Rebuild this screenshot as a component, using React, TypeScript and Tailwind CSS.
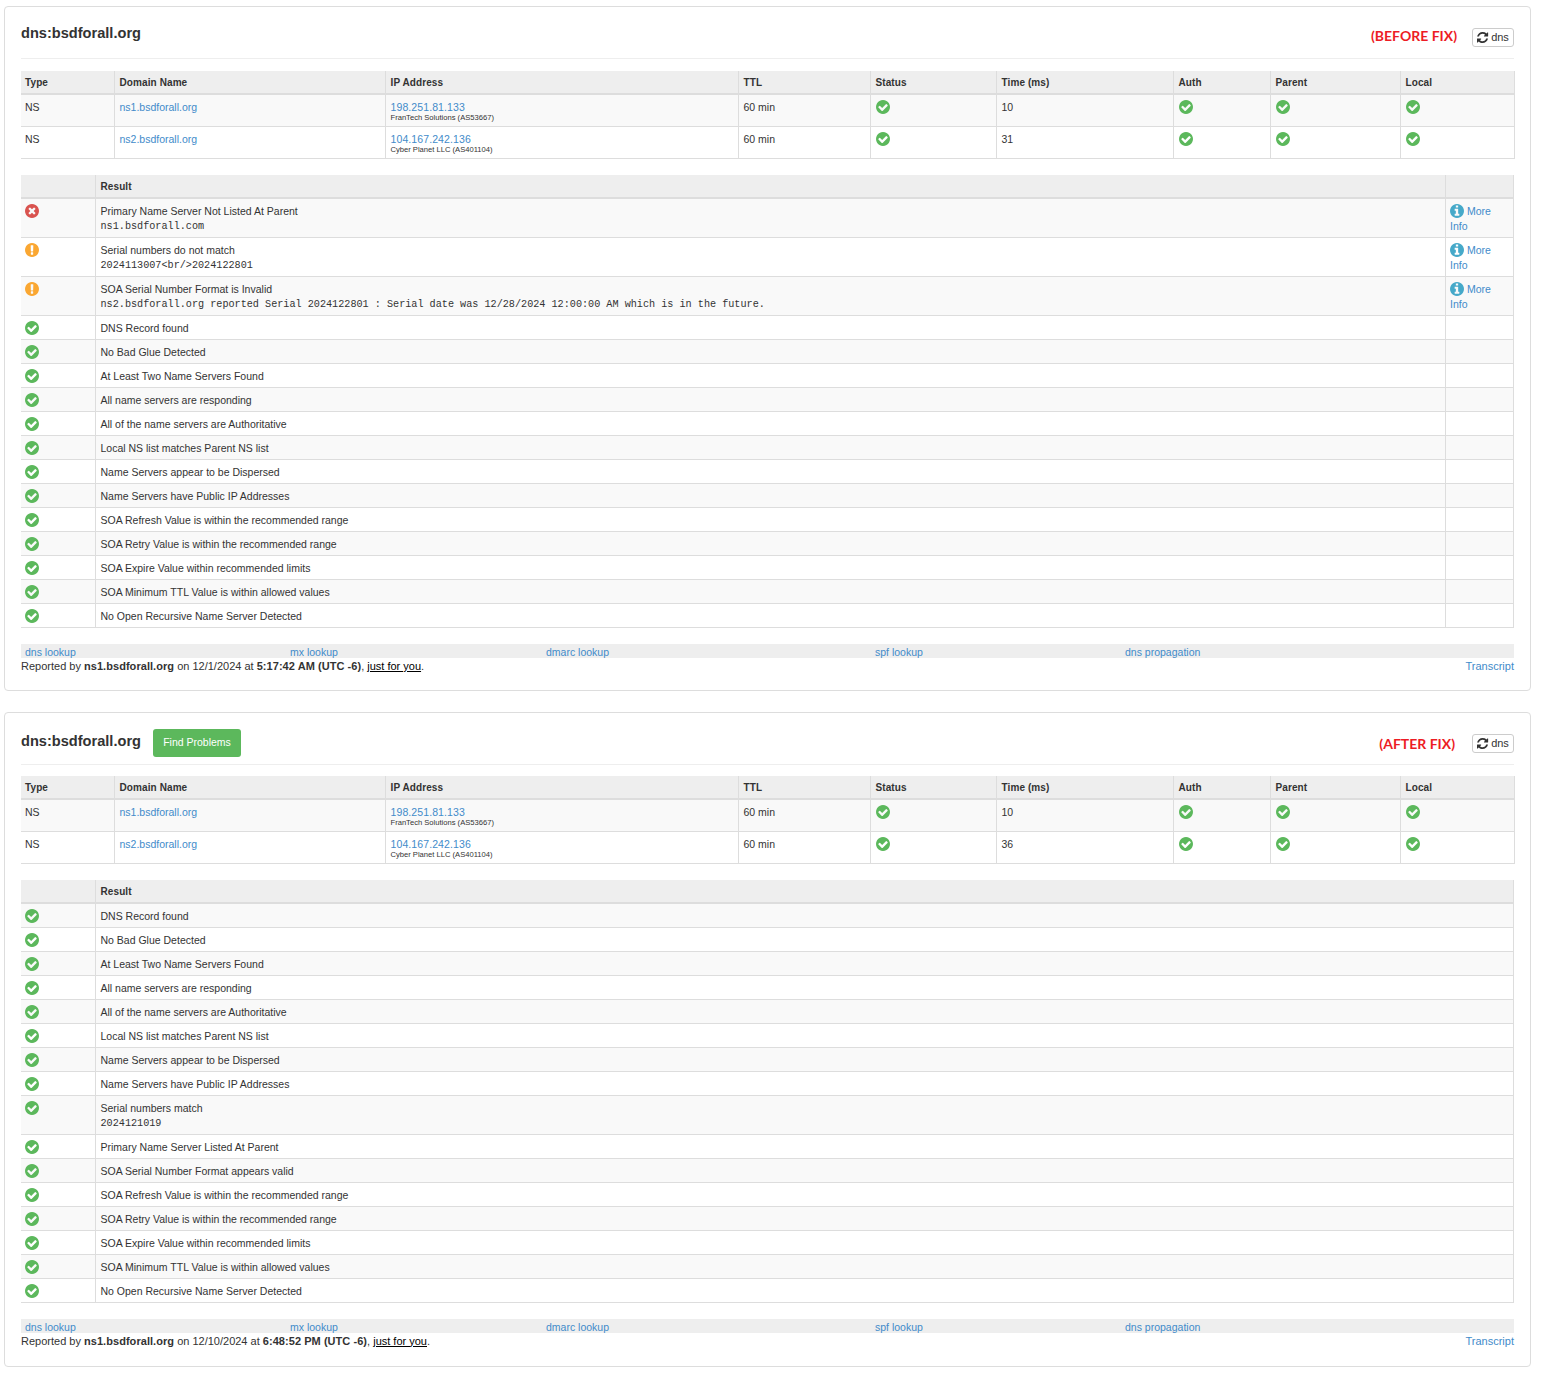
type ServerRow = { name: string; ip: string; org: string; time: string };
type ResultRow = { kind: "ok" | "warn" | "fail"; text: string; detail?: string; more?: boolean };

const th =
  "border-b-2 border-r border-[#ddd] pl-[5px] first:pl-[4px] pt-[1px] text-left align-middle text-[10px] font-bold tracking-[0.1px] text-[#333]";
const td = "border-b border-r border-[#ddd] pb-[3px] pl-[5px] first:pl-[4px] pr-[4px] pt-[5px] align-top text-[10.5px] text-[#333]";

// Font Awesome 4 glyphs, the site uses these rather than the rounder FA5 set
const CHECK =
  "M1412 734q0-28-18-46l-91-90q-19-19-45-19t-45 19l-408 407-226-226q-19-19-45-19t-45 19l-91 90q-18 18-18 46 0 27 18 45l362 362q19 19 45 19 27 0 46-19l543-543q18-18 18-45zm252 162q0 209-103 385.5t-279.5 279.5-385.5 103-385.5-103-279.5-279.5-103-385.5 103-385.5 279.5-279.5 385.5-103 385.5 103 279.5 279.5 103 385.5z";
const TIMES =
  "M1277 1122q0-26-19-45l-181-181 181-181q19-19 19-45 0-27-19-46l-90-90q-19-19-46-19-26 0-45 19l-181 181-181-181q-19-19-45-19-27 0-46 19l-90 90q-19 19-19 46 0 26 19 45l181 181-181 181q-19 19-19 45 0 27 19 46l90 90q19 19 46 19 26 0 45-19l181-181 181 181q19 19 45 19 27 0 46-19l90-90q19-19 19-46zm387-226q0 209-103 385.5t-279.5 279.5-385.5 103-385.5-103-279.5-279.5-103-385.5 103-385.5 279.5-279.5 385.5-103 385.5 103 279.5 279.5 103 385.5z";
const EXCLAMATION =
  "M896 128q209 0 385.5 103t279.5 279.5 103 385.5-103 385.5-279.5 279.5-385.5 103-385.5-103-279.5-279.5-103-385.5 103-385.5 279.5-279.5 385.5-103zm128 1247v-190q0-14-9-23.5t-22-9.5h-192q-13 0-23 10t-10 23v190q0 13 10 23t23 10h192q13 0 22-9.5t9-23.5zm-2-344l18-621q0-12-10-18-10-8-24-8h-220q-14 0-24 8-10 6-10 18l17 621q0 10 10 17.5t24 7.5h185q14 0 23.5-7.5t10.5-17.5z";
const INFO =
  "M1152 1376v-160q0-14-9-23t-23-9h-96v-512q0-14-9-23t-23-9h-320q-14 0-23 9t-9 23v160q0 14 9 23t23 9h96v320h-96q-14 0-23 9t-9 23v160q0 14 9 23t23 9h448q14 0 23-9t9-23zm-128-896v-160q0-14-9-23t-23-9h-192q-14 0-23 9t-9 23v160q0 14 9 23t23 9h192q14 0 23-9t9-23zm640 416q0 209-103 385.5t-279.5 279.5-385.5 103-385.5-103-279.5-279.5-103-385.5 103-385.5 279.5-279.5 385.5-103 385.5 103 279.5 279.5 103 385.5z";
const REFRESH =
  "M1511 1056q0 5-1 7-64 268-268 434.5t-478 166.5q-146 0-282.5-55t-243.5-157l-129 129q-19 19-45 19t-45-19-19-45v-448q0-26 19-45t45-19h448q26 0 45 19t19 45-19 45l-137 137q71 66 161 102t187 36q134 0 250-65t186-179q11-17 53-117 8-23 30-23h192q13 0 22.5 9.5t9.5 22.5zm25-800v448q0 26-19 45t-45 19h-448q-26 0-45-19t-19-45 19-45l138-138q-148-137-349-137-134 0-250 65t-186 179q-11 17-53 117-8 23-30 23h-199q-13 0-22.5-9.5t-9.5-22.5v-7q65-268 270-434.5t480-166.5q146 0 284 55.5t245 156.5l130-129q19-19 45-19t45 19 19 45z";

const OK_BEFORE = [
  "DNS Record found",
  "No Bad Glue Detected",
  "At Least Two Name Servers Found",
  "All name servers are responding",
  "All of the name servers are Authoritative",
  "Local NS list matches Parent NS list",
  "Name Servers appear to be Dispersed",
  "Name Servers have Public IP Addresses",
  "SOA Refresh Value is within the recommended range",
  "SOA Retry Value is within the recommended range",
  "SOA Expire Value within recommended limits",
  "SOA Minimum TTL Value is within allowed values",
  "No Open Recursive Name Server Detected",
];

const beforeResults: ResultRow[] = [
  { kind: "fail", text: "Primary Name Server Not Listed At Parent", detail: "ns1.bsdforall.com", more: true },
  { kind: "warn", text: "Serial numbers do not match", detail: "2024113007<br/>2024122801", more: true },
  {
    kind: "warn",
    text: "SOA Serial Number Format is Invalid",
    detail: "ns2.bsdforall.org reported Serial 2024122801 : Serial date was 12/28/2024 12:00:00 AM which is in the future.",
    more: true,
  },
  ...OK_BEFORE.map((text) => ({ kind: "ok" as const, text })),
];

const afterResults: ResultRow[] = [
  ...OK_BEFORE.slice(0, 8).map((text) => ({ kind: "ok" as const, text })),
  { kind: "ok", text: "Serial numbers match", detail: "2024121019" },
  { kind: "ok", text: "Primary Name Server Listed At Parent" },
  { kind: "ok", text: "SOA Serial Number Format appears valid" },
  ...OK_BEFORE.slice(8).map((text) => ({ kind: "ok" as const, text })),
];

function Glyph({ d, className }: { d: string; className: string }) {
  return (
    <svg viewBox="128 128 1536 1536" fill="currentColor" className={className}>
      <path d={d} />
    </svg>
  );
}

function StatusIcon({ kind }: { kind: ResultRow["kind"] }) {
  if (kind === "fail") return <Glyph d={TIMES} className="h-[14px] w-[14px] text-[#d9534f]" />;
  if (kind === "warn") return <Glyph d={EXCLAMATION} className="h-[14px] w-[14px] text-[#faa732]" />;
  return <Glyph d={CHECK} className="h-[14px] w-[14px] text-[#5cb85c]" />;
}

function ServerTable({ rows, compact }: { rows: ServerRow[]; compact: boolean }) {
  return (
    <table className={`${compact ? "mt-[11px]" : "mt-[12px]"} w-full table-fixed border-collapse`}>
      <colgroup>
        <col className="w-[93px]" />
        <col className="w-[271px]" />
        <col className="w-[353px]" />
        <col className="w-[132px]" />
        <col className="w-[126px]" />
        <col className="w-[177px]" />
        <col className="w-[97px]" />
        <col className="w-[130px]" />
        <col className="w-[114px]" />
      </colgroup>
      <thead>
        <tr className="h-[23px] bg-[#eee]">
          {["Type", "Domain Name", "IP Address", "TTL", "Status", "Time (ms)", "Auth", "Parent", "Local"].map((h) => (
            <th key={h} className={th}>
              {h}
            </th>
          ))}
        </tr>
      </thead>
      <tbody>
        {rows.map((row, i) => (
          <tr key={row.name} className={i % 2 === 0 ? "h-[32px] bg-[#f9f9f9]" : "h-[32px] bg-white"}>
            <td className={td}>NS</td>
            <td className={td}>
              <a className="text-[#428bca]">{row.name}</a>
            </td>
            <td className={td}>
              <a className="block tracking-[0.1px] leading-[14px] text-[#428bca]">{row.ip}</a>
              <div className="-mt-[1px] text-[7.6px] leading-[9px] text-[#333]">{row.org}</div>
            </td>
            <td className={td}>60 min</td>
            <td className={td}>
              <StatusIcon kind="ok" />
            </td>
            <td className={td}>{row.time}</td>
            <td className={td}>
              <StatusIcon kind="ok" />
            </td>
            <td className={td}>
              <StatusIcon kind="ok" />
            </td>
            <td className={td}>
              <StatusIcon kind="ok" />
            </td>
          </tr>
        ))}
      </tbody>
    </table>
  );
}

function ResultTable({ rows, showMore }: { rows: ResultRow[]; showMore: boolean }) {
  return (
    <table className="mt-[16px] w-full table-fixed border-collapse">
      <colgroup>
        <col className="w-[74px]" />
        <col />
        {showMore && <col className="w-[68px]" />}
      </colgroup>
      <thead>
        <tr className="h-[23px] bg-[#eee]">
          <th className={th} />
          <th className={th}>Result</th>
          {showMore && <th className={th} />}
        </tr>
      </thead>
      <tbody>
        {rows.map((row, i) => (
          <tr
            key={row.text}
            className={`${row.kind === "fail" ? "h-[40px]" : "h-[24px]"} ${i % 2 === 0 ? "bg-[#f9f9f9]" : "bg-white"}`}
          >
            <td className={td}>
              <StatusIcon kind={row.kind} />
            </td>
            <td className={td}>
              <div className="leading-[15px]">{row.text}</div>
              {row.detail && (
                <div className="font-['Liberation_Mono',monospace] text-[10.17px] leading-[15px]">{row.detail}</div>
              )}
            </td>
            {showMore && (
              <td className={td}>
                {row.more && (
                  <a className="-ml-[1px] block leading-[15px] text-[#428bca]">
                    <Glyph d={INFO} className="mr-[3px] inline h-[14px] w-[14px] align-[-3px] text-[#46a9c9]" />
                    More Info
                  </a>
                )}
              </td>
            )}
          </tr>
        ))}
      </tbody>
    </table>
  );
}

function Card({
  label,
  labelClass,
  findProblems,
  servers,
  results,
  showMore,
  reportDate,
  reportTime,
}: {
  label: string;
  labelClass: string;
  findProblems?: boolean;
  servers: ServerRow[];
  results: ResultRow[];
  showMore: boolean;
  reportDate: string;
  reportTime: string;
}) {
  return (
    <section
      className={`w-[1527px] rounded-[4px] border border-[#ddd] bg-white px-[16px] ${findProblems ? "pb-[16px]" : "pb-[15px]"}`}
    >
      <header className="flex h-[52px] items-center border-b border-[#eee]">
        <h2 className={`text-[14.6px] font-bold text-[#333] ${findProblems ? "pt-[6px]" : "pt-[2px]"}`}>dns:bsdforall.org</h2>
        {findProblems && (
          <button className="ml-[12px] mt-[8px] h-[28px] w-[88px] rounded-[3px] bg-[#5cb85c] text-[10.5px] text-white">
            Find Problems
          </button>
        )}
        <span className={`ml-auto font-['Lato',sans-serif] text-[14px] font-bold text-[#ed1c24] ${labelClass}`}>{label}</span>
        <button className="mt-[10px] flex h-[19px] w-[42px] items-center justify-center gap-[1px] rounded-[3px] border border-[#ccc] text-[11px] text-[#333]">
          <svg viewBox="0 0 1792 1792" fill="currentColor" className="h-[13px] w-[13px]">
            <path d={REFRESH} />
          </svg>
          dns
        </button>
      </header>
      <ServerTable rows={servers} compact={Boolean(findProblems)} />
      <ResultTable rows={results} showMore={showMore} />
      <nav className="mt-[16px] grid h-[14px] grid-cols-[265px_256px_329px_250px_1fr] bg-[#eee] px-[4px] text-[10.5px] leading-[17px] text-[#428bca]">
        <a>dns lookup</a>
        <a>mx lookup</a>
        <a>dmarc lookup</a>
        <a>spf lookup</a>
        <a>dns propagation</a>
      </nav>
      <footer className="flex justify-between text-[11px] leading-[17px] text-[#333]">
        <span>
          Reported by <b className="tracking-[0.05px]">ns1.bsdforall.org</b> on {reportDate} at{" "}
          <b className="tracking-[0.05px]">{reportTime} (UTC -6)</b>, <a className="text-black underline">just for you</a>.
        </span>
        <a className="text-[#428bca]">Transcript</a>
      </footer>
    </section>
  );
}

export default function App() {
  return (
    <div className="flex min-h-[1384px] flex-col gap-[21px] bg-white pl-[4px] pt-[6px] font-['Liberation_Sans',Arial,sans-serif]">
      <Card
        label="(BEFORE FIX)"
        labelClass="mr-[15px] mt-[5px]"
        servers={[
          { name: "ns1.bsdforall.org", ip: "198.251.81.133", org: "FranTech Solutions (AS53667)", time: "10" },
          { name: "ns2.bsdforall.org", ip: "104.167.242.136", org: "Cyber Planet LLC (AS401104)", time: "31" },
        ]}
        results={beforeResults}
        showMore
        reportDate="12/1/2024"
        reportTime="5:17:42 AM"
      />
      <Card
        label="(AFTER FIX)"
        labelClass="mr-[17px] mt-[10px]"
        findProblems
        servers={[
          { name: "ns1.bsdforall.org", ip: "198.251.81.133", org: "FranTech Solutions (AS53667)", time: "10" },
          { name: "ns2.bsdforall.org", ip: "104.167.242.136", org: "Cyber Planet LLC (AS401104)", time: "36" },
        ]}
        results={afterResults}
        showMore={false}
        reportDate="12/10/2024"
        reportTime="6:48:52 PM"
      />
    </div>
  );
}
